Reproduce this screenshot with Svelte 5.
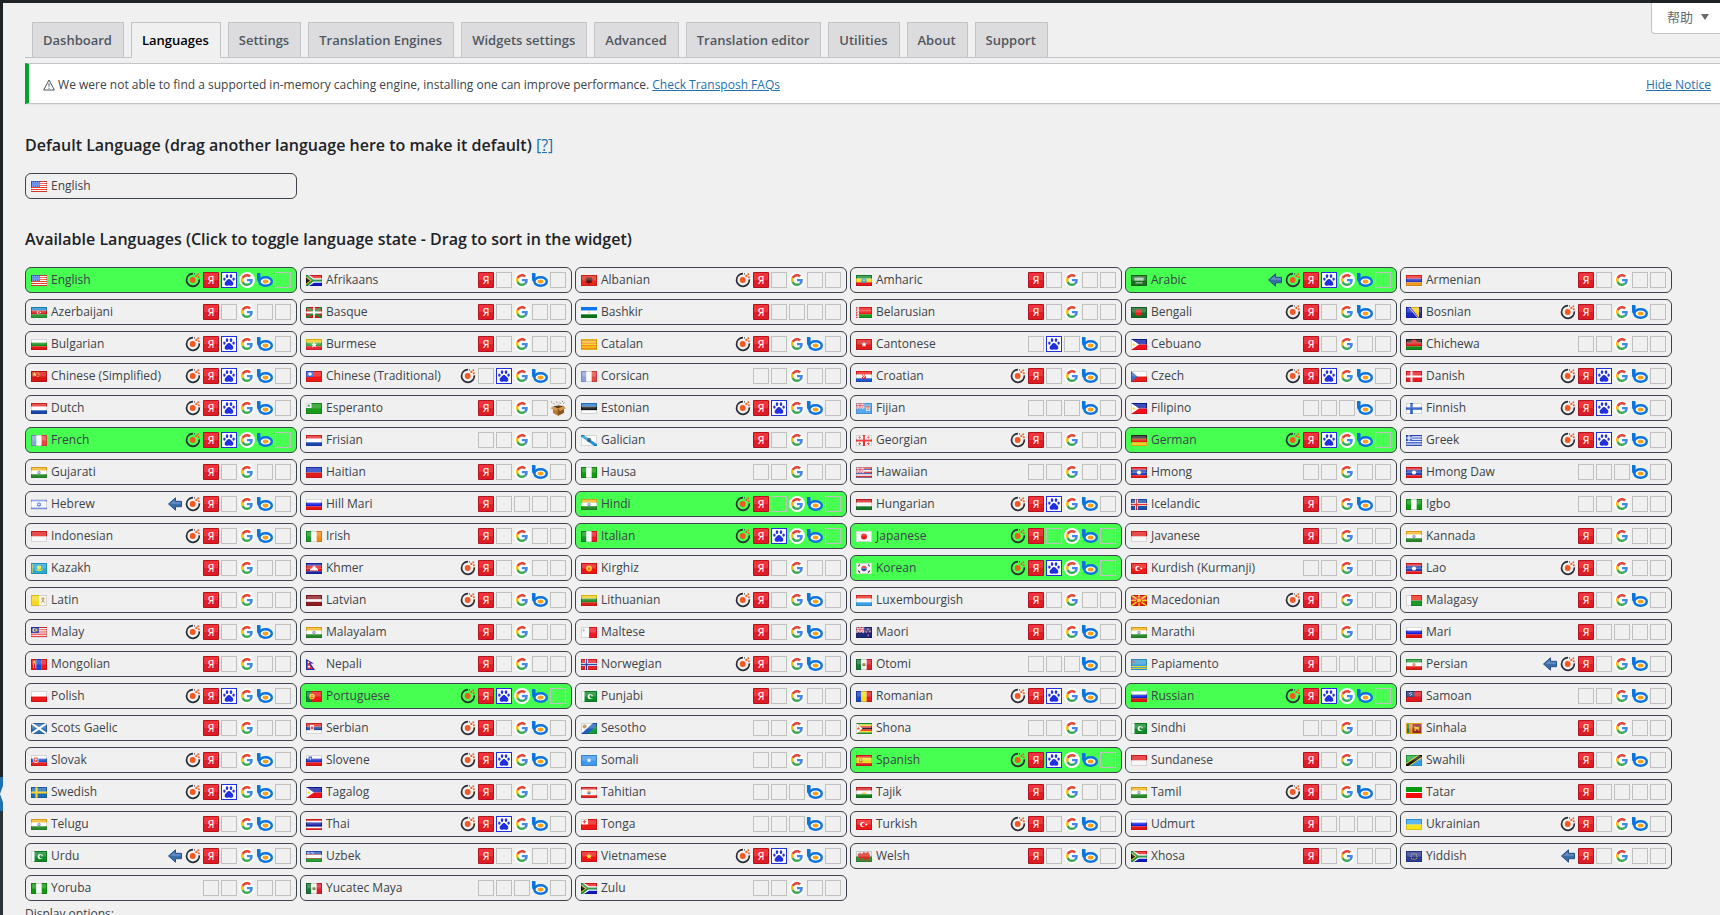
<script>
  const tabs = [
    'Dashboard', 'Languages', 'Settings', 'Translation Engines', 'Widgets settings',
    'Advanced', 'Translation editor', 'Utilities', 'About', 'Support'
  ];
  let current = $state('Languages');

  // Flag drawing helpers, all on a 16 x 11 field.
  const r = (c, x, y, w, h) => `<rect fill="${c}" x="${x}" y="${y}" width="${w}" height="${h}"/>`;
  const p = (c, d) => `<path fill="${c}" d="${d}"/>`;
  const l = (c, w, d) => `<path fill="none" stroke="${c}" stroke-width="${w}" d="${d}"/>`;
  const o = (c, x, y, s) => `<circle fill="${c}" cx="${x}" cy="${y}" r="${s}"/>`;
  const bg = (c) => r(c, 0, 0, 16, 11);
  const rows = (...cs) => cs.map((c, i) => r(c, 0, (i * 11) / cs.length, 16, 11 / cs.length)).join('');
  const cols = (...cs) => cs.map((c, i) => r(c, (i * 16) / cs.length, 0, 16 / cs.length, 11)).join('');
  const star = (c, x, y, s) =>
    p(c, 'M' + Array.from({ length: 10 }, (_, i) => {
      const a = (i * Math.PI) / 5 - Math.PI / 2;
      const q = i % 2 ? s * 0.42 : s;
      return `${(x + q * Math.cos(a)).toFixed(2)} ${(y + q * Math.sin(a)).toFixed(2)}`;
    }).join('L') + 'Z');
  const moon = (f, b, x, y, s) => o(f, x, y, s) + o(b, x + s * 0.4, y, s * 0.75);
  const jack = l('#fff', 1.6, 'M0 0L8 5.5M8 0L0 5.5') + l('#e05060', 0.8, 'M0 0L8 5.5M8 0L0 5.5') +
    l('#fff', 2, 'M4 0V5.5M0 2.75H8') + l('#e02030', 1, 'M4 0V5.5M0 2.75H8');
  const cross = (field, a, b) => bg(field) + l(a, 3, 'M5.5 0V11M0 5.5H16') + l(b, 1.4, 'M5.5 0V11M0 5.5H16');
  const ph = rows('#1020a0', '#f01020') + p('#fff', 'M0 0L8 5.5L0 11Z') + o('#f8d820', 2.6, 5.5, 1.2);
  const southAfrica = rows('#e8201c', '#1018c0') + p('#fff', 'M0 0H3L8 3.3H16V7.7H8L3 11H0Z') +
    p('#18903c', 'M0 0H1.6L7.2 4.4H16V6.6H7.2L1.6 11H0Z') + p('#f8c820', 'M0 1.2L5.6 5.5L0 9.8Z') + p('#101010', 'M0 2.4L4.2 5.5L0 8.6Z');
  const india = rows('#f5b51c', '#fff', '#2c8a2c') + o('#8090d0', 8, 5.5, 1.7) + o('#c8d0f0', 8, 5.5, 0.8);
  const lao = rows('#f01818', '#2444b8', '#2444b8', '#f01818') + o('#fff', 8, 5.5, 2.1);
  const mexico = cols('#187838', '#f6f6f0', '#d82030') + o('#a08850', 8, 5.5, 1.8) + o('#608048', 8, 6.1, 0.8);
  const pakistan = bg('#108a28') + r('#fff', 0, 0, 3.5, 11) + moon('#fff', '#108a28', 9.3, 5.5, 2.6) + star('#fff', 11, 4.6, 1.2);
  const russia = rows('#fff', '#1620e0', '#e81414');
  const dutch = rows('#e82828', '#fff', '#1c48b0');
  const indonesia = rows('#e02020', '#f8f8f8');
  const france = cols('#8ca0dc', '#fafafa', '#e84840');
  const nigeria = cols('#109a10', '#fafafa', '#109a10');
  const turkey = bg('#ee1818') + moon('#fff', '#ee1818', 6.6, 5.5, 2.5) + star('#fff', 10.3, 5.5, 1.5);

  const flags = {
    us: bg('#fff') + [0, 2, 4, 6, 8, 10].map((y) => r('#f04030', 0, y, 16, 1)).join('') + r('#3060e8', 0, 0, 9, 6) +
      [1, 3, 5].map((y) => [1, 3, 5, 7].map((x) => r('#d8e4ff', x + (y === 3 ? 0.6 : 0), y - 0.3, 0.8, 0.8)).join('')).join(''),
    za: southAfrica,
    al: bg('#e8281c') + p('#4c1410', 'M8 2l1 1 2-1-.5 2 2 1-2 .6L11 8 9 7.4 8 9.4 7 7.4 5 8l.5-2.4-2-.6 2-1L5 2l2 1Z'),
    et: rows('#188c30', '#f8e020', '#e81818') + o('#38a0d8', 8, 5.5, 2.6) + star('#f0e040', 8, 5.5, 1.4),
    sa: bg('#1a6c20') + r('#cfe4cf', 3.5, 2.6, 9, 3) + l('#1a6c20', 0.5, 'M5 2.6v3M7 2.6v2M9 3.2v2.6M11 2.6v2') + r('#cfe4cf', 4.5, 7.4, 7, 1),
    am: rows('#f02c24', '#2c38c8', '#f59a1c'),
    az: rows('#1f8fd0', '#e42020', '#2c9a38') + moon('#fff', '#e42020', 7.4, 5.5, 1.6) + o('#fff', 9.4, 5.5, 0.8),
    eu: bg('#d82020') + l('#109838', 2, 'M0 0L16 11M16 0L0 11') + l('#fff', 1.8, 'M8 0V11M0 5.5H16'),
    bashkir: rows('#0878f8', '#fff', '#0a7018') + o('#f0e888', 8, 5.5, 1.3),
    by: rows('#f01c18', '#f01c18', '#18a020') + r('#fff', 0, 0, 3, 11) + l('#e83030', 1.2, 'M.8 0V11') + l('#fff', 1.2, 'M.8 1.5v1M.8 4v1M.8 6.5v1M.8 9v1') + l('#e83030', 0.7, 'M2.2 1v1.4M2.2 4v1.4M2.2 7v1.4'),
    bd: bg('#186c28') + o('#f02020', 7.4, 5.5, 3.2),
    ba: bg('#1c28c0') + p('#f8cc20', 'M4.5 0H13V11Z') + l('#dfe4ff', 0.9, 'M3 .5L12 11'),
    bg: rows('#fafafa', '#18901c', '#e81414'),
    mm: rows('#f8cc10', '#38a838', '#e82838') + star('#fff', 8, 5.8, 3.4),
    cat: bg('#f8d020') + [1.5, 4, 6.5, 9].map((y) => r('#f07818', 0, y - 0.3, 16, 1)).join(''),
    hk: bg('#e01c1c') + star('#fff', 8, 5.5, 3),
    ph,
    mw: rows('#202020', '#e01818', '#188818') + p('#f02020', 'M5 3.6a3 3 0 0 1 6 0Z'),
    cn: bg('#d81414') + star('#f8e020', 3.6, 3.4, 2.4) + o('#f8e020', 7, 1.6, 0.6) + o('#f8e020', 8, 3.2, 0.6) + o('#f8e020', 7, 5.4, 0.6),
    tw: bg('#f01818') + r('#3858d8', 0, 0, 8, 6) + o('#fff', 4, 3, 1.7),
    france,
    hr: rows('#f02020', '#fff', '#1c58d0') + r('#e83030', 6, 2.4, 4, 5.6) + r('#fff', 7, 3.4, 1, 1.2) + r('#fff', 9, 3.4, 1, 1.2) + r('#fff', 6, 4.6, 1, 1.2) + r('#fff', 8, 4.6, 1, 1.2) + r('#fff', 7, 5.8, 1, 1.2),
    cz: rows('#fafafa', '#e81c1c') + p('#3c6cc8', 'M0 0L6.5 5.5L0 11Z'),
    dk: bg('#e81c24') + l('#fff', 2, 'M5.5 0V11M0 5.5H16'),
    dutch,
    eo: bg('#189a1c') + r('#fff', 0, 0, 5.5, 5) + star('#189a1c', 2.7, 2.7, 1.8),
    ee: rows('#2c78d0', '#181818', '#fafafa'),
    fj: bg('#58a8ec') + jack + r('#fff', 10, 3.4, 4, 4.4) + r('#e05030', 10, 3.2, 4, 1.4) + l('#c08040', 0.8, 'M12 4.4v3.4M10 6H14'),
    fi: bg('#fafafa') + l('#2c60c8', 2.6, 'M5.5 0V11M0 5.5H16'),
    gl: bg('#fafafa') + l('#1898d8', 3, 'M0 0L16 11') + o('#304860', 8, 4.8, 2.1),
    ge: bg('#fafafa') + l('#f03030', 2, 'M8 0V11M0 5.5H16') + [[3.6, 2.4], [12.4, 2.4], [3.6, 8.6], [12.4, 8.6]].map(([x, y]) => l('#f05050', 1, `M${x} ${y - 1.3}v2.6M${x - 1.3} ${y}h2.6`)).join(''),
    de: rows('#282828', '#e02018', '#f8cc20'),
    gr: bg('#fafafa') + [0, 2.4, 4.8, 7.2, 9.6].map((y) => r('#2c50c8', 0, y, 16, 1.3)).join('') + r('#2c50c8', 0, 0, 6, 6) + l('#fff', 1.1, 'M3 0V6M0 3H6'),
    india,
    ht: rows('#1c38c0', '#e01c1c'),
    nigeria,
    hawaii: bg('#fafafa') + [0, 4.2, 8.4].map((y) => r('#e83030', 0, y + 0.4, 16, 1.4) + r('#3048b0', 0, y + 2, 16, 1)).join('') + r('#8090d0', 0, 0, 7.5, 5.5) + jack,
    lao,
    il: bg('#fafafa') + r('#7c90e8', 0, 1, 16, 1.4) + r('#7c90e8', 0, 8.6, 16, 1.4) + l('#5870e0', 0.7, 'M8 3.4L10 6.6H6ZM8 7.6L6 4.4H10Z'),
    russia,
    hu: rows('#d82028', '#fafafa', '#187828'),
    is: cross('#1c50b0', '#fff', '#e81c1c'),
    indonesia,
    ie: cols('#189a28', '#fafafa', '#f58a18'),
    it: cols('#189030', '#fafafa', '#e81c24'),
    jp: bg('#fafafa') + o('#e81414', 8, 5.5, 3),
    kz: bg('#28a8d8') + o('#f4e430', 8, 4.8, 2.2) + l('#f4e430', 0.9, 'M4 6.2Q8 9.4 12 6.2') + l('#d8d850', 0.9, 'M1.2 1V10'),
    kh: rows('#1c28a8', '#e41818', '#e41818', '#1c28a8') + p('#fff', 'M4 7.6V6h1.4V4.8h1.2V3.6h1V2.8h1v.8h1v1.2h1.2V6H12v1.6Z'),
    kg: bg('#ec1414') + o('#f8c820', 8, 5.5, 2.9) + o('#ec6018', 8, 5.5, 1.3),
    kr: bg('#fafafa') + p('#e02030', 'M5.2 5.5a2.8 2.8 0 0 1 5.6 0Z') + p('#2050c0', 'M5.2 5.5a2.8 2.8 0 0 0 5.6 0Z') + l('#303030', 1.2, 'M2.2 3.4L4 1.4M12 1.4L13.8 3.4M2.2 7.6L4 9.6M12 9.6L13.8 7.6'),
    turkey,
    va: cols('#f8d820', '#f6f6f0') + l('#b09858', 1, 'M10.5 3.4L13.5 7.6M13.5 3.4L10.5 7.6') + o('#d08840', 12, 3.4, 1.1),
    lv: bg('#8c1c20') + r('#fafafa', 0, 4.2, 16, 2.6),
    lt: rows('#f4d018', '#188c28', '#d82018'),
    lu: rows('#f03028', '#fafafa', '#38a0e8'),
    mk: bg('#e81818') + l('#f8d020', 1.6, 'M0 0L16 11M16 0L0 11M8 0V11M0 5.5H16') + o('#e81818', 8, 5.5, 2.9) + o('#f8d020', 8, 5.5, 2),
    mg: rows('#f02818', '#189a28') + r('#fafafa', 0, 0, 5, 11),
    my: bg('#fff') + [0, 2.2, 4.4, 6.6, 8.8].map((y) => r('#e83030', 0, y, 16, 1.1)).join('') + r('#2c38b0', 0, 0, 8, 6) + moon('#f8e030', '#2c38b0', 3.4, 3, 2) + o('#f8e030', 5.4, 3, 1),
    mt: cols('#fafafa', '#ee1c24') + l('#b0b0b0', 0.9, 'M2.6 1.6v3M1.1 3.1h3'),
    nz: bg('#1c2878') + jack + [[12, 2.4], [14, 4.6], [10.4, 5], [12.2, 8.4]].map(([x, y]) => o('#f08088', x, y, 0.8)).join(''),
    mn: cols('#f01818', '#1848d8', '#f01818') + r('#f8c820', 2, 4.4, 0.9, 4.4) + r('#f8c820', 4, 4.4, 0.9, 4.4) + o('#f8c820', 3.4, 3, 1.2),
    np: p('#2030a0', 'M0 0L8 4.6H4.6L9 10.9H0Z') + p('#e02840', 'M1 1.7L5.4 4.1H2.8L7 9.9H1Z') + o('#fff', 2.6, 3.4, 0.8) + o('#fff', 3, 7.6, 1.2),
    no: cross('#e82028', '#fff', '#1c38a0'),
    mexico,
    aw: bg('#38a0d8') + r('#f8e020', 0, 7, 16, 0.9) + r('#f8e020', 0, 8.9, 16, 0.9) + star('#f02828', 2.6, 2.6, 1.7),
    ir: rows('#28a038', '#fafafa', '#e42018') + o('#e86050', 8, 5.5, 1.5) + o('#fff', 8, 5.2, 0.5),
    pl: rows('#fafafa', '#ee1818'),
    pt: r('#188030', 0, 0, 6, 11) + r('#f01818', 6, 0, 10, 11) + o('#f8d020', 6, 5.5, 2.8) + r('#e83030', 4.8, 4.1, 2.4, 2.8) + r('#fff', 5.5, 4.7, 1, 1.4),
    pakistan,
    ro: cols('#1c48c0', '#f8dc20', '#e42020'),
    ws: bg('#e01820') + r('#283878', 0, 0, 8.5, 6) + l('#c8d0f0', 0.9, 'M3 2.6L5.6 1.6M4.2 4.6L6 3'),
    scot: bg('#2c70b8') + l('#fff', 2, 'M0 0L16 11M16 0L0 11'),
    rs: rows('#e42828', '#2448a0', '#fafafa') + p('#f4f0f0', 'M4 2h4v4.6q-2 2-4 0Z') + o('#e03030', 6, 4.8, 1.5),
    ls: bg('#fafafa') + p('#189a38', 'M16 0V11H4Z') + p('#2060c0', 'M12 0H16V2.6L6.5 11H0Z') + o('#b08848', 3.6, 3.6, 2),
    zw: [0, 1.57, 3.14, 4.71, 6.28, 7.85, 9.42].map((y, i) => r(['#28a038', '#f8dc20', '#e82020', '#181818', '#e82020', '#f8dc20', '#28a038'][i], 0, y, 16, 1.6)).join('') + p('#fff', 'M0 0L6.5 5.5L0 11Z') + star('#e84020', 2.4, 5.5, 1.9),
    lk: bg('#f8c020') + r('#188050', 1, 1, 2.2, 9) + r('#f08020', 3.2, 1, 2.2, 9) + r('#98242c', 6.4, 1, 8.6, 9) + p('#f0b830', 'M8.4 8V5l-.6-2 2 1h3l.6 2v2h-1V6.6H9.8V8Z'),
    sk: rows('#fafafa', '#1c50d0', '#e82020') + p('#fff', 'M2.4 2h5v4.4q-2.5 3-5 0Z') + p('#e82828', 'M3 2.6h3.8v3.6q-1.9 2-3.8 0Z') + l('#fff', 0.7, 'M4.9 3v3.6M3.8 4.4h2.2'),
    si: rows('#fafafa', '#1c34c8', '#e81818') + p('#2050c0', 'M2.6 1.4h3.4v3.4q-1.7 2-3.4 0Z') + o('#fff', 4.3, 3.8, 0.7),
    so: bg('#4098ec') + star('#fff', 8, 5.5, 2.6),
    es: rows('#ee1c1c', '#f8dc20', '#f8dc20', '#ee1c1c') + r('#d87828', 3, 3.4, 3.4, 4) + r('#f0e0c0', 4, 4.2, 1.2, 1.8),
    tz: p('#28a848', 'M0 0H16L0 11Z') + p('#30a0e0', 'M16 0V11H0Z') + l('#f8dc20', 4.4, 'M0 11L16 0') + l('#181818', 2.8, 'M0 11L16 0'),
    se: bg('#1c6cb8') + l('#f8d020', 2.2, 'M5.5 0V11M0 5.5H16'),
    pf: rows('#e42828', '#fafafa', '#fafafa', '#e42828') + o('#f0a830', 8, 5, 1.8) + p('#4080c8', 'M6.2 5.6h3.6a1.8 1.8 0 0 1-3.6 0Z'),
    tj: rows('#d82020', '#fafafa', '#188020') + p('#f0cc40', 'M5.5 7V5.6l1.4.6L8 4.4l1.1 1.8 1.4-.6V7Z'),
    tatar: r('#0a9a10', 0, 0, 16, 5) + r('#fff', 0, 5, 16, 1) + r('#fc0808', 0, 6, 16, 5),
    th: bg('#fafafa') + r('#ee1c1c', 0, 0, 16, 1.8) + r('#1c24a0', 0, 3.4, 16, 4.2) + r('#ee1c1c', 0, 9.2, 16, 1.8),
    to: bg('#ee1818') + r('#fff', 0, 0, 7, 5.4) + l('#ee3030', 1.2, 'M3.5 1v3.4M1.8 2.7h3.4'),
    ua: rows('#38a4f0', '#f8e41c'),
    uz: rows('#3058c0', '#fafafa', '#28a038') + r('#d83030', 0, 3.4, 16, 0.6) + r('#d83030', 0, 7, 16, 0.6) + moon('#fff', '#3058c0', 2.6, 1.9, 1.2) + o('#fff', 5.4, 1.2, 0.5) + o('#fff', 7, 1.2, 0.5) + o('#fff', 7, 2.5, 0.5),
    vn: bg('#ee1414') + star('#f8ec20', 8, 5.5, 3.2),
    wales: rows('#e8e8e8', '#289a38') + p('#d83028', 'M2 3l2-1.6 1.6 1.6 2-2 2.4 1 2-1.2 1.4 2 1.2 3-1.6.4.6 3.2h-1.6l-1-2-1.6 2.4H7.6L8 7.4 5.6 7 5 9.4H3.2L4 6 1.6 6.6Z'),
    europe: bg('#2c3c94') + Array.from({ length: 10 }, (_, i) => o('#f4e040', 8 + 3 * Math.cos(i * 0.628), 5.5 + 3 * Math.sin(i * 0.628), 0.5)).join('')
  };
  const matte = ['bashkir', 'tatar', 'np'];

  // name | flag | engines: a right-to-left, o open translate, y Yandex, b Baidu, g Google, m Bing, p Apertium, . unsupported
  const source = `English|us|oybgm.|1
Afrikaans|za|y.gm.
Albanian|al|oy.g..
Amharic|et|y.g..
Arabic|sa|aoybgm.|1
Armenian|am|y.g..
Azerbaijani|az|y.g..
Basque|eu|y.g..
Bashkir|bashkir|y....
Belarusian|by|y.g..
Bengali|bd|oy.gm.
Bosnian|ba|oy.gm.
Bulgarian|bg|oybgm.
Burmese|mm|y.g..
Catalan|cat|oy.gm.
Cantonese|hk|.b.m.
Cebuano|ph|y.g..
Chichewa|mw|..g..
Chinese (Simplified)|cn|oybgm.
Chinese (Traditional)|tw|o.bgm.
Corsican|france|..g..
Croatian|hr|oy.gm.
Czech|cz|oybgm.
Danish|dk|oybgm.
Dutch|dutch|oybgm.
Esperanto|eo|y.g.p
Estonian|ee|oybgm.
Fijian|fj|...m.
Filipino|ph|...m.
Finnish|fi|oybgm.
French|france|oybgm.|1
Frisian|dutch|..g..
Galician|gl|y.g..
Georgian|ge|oy.g..
German|de|oybgm.|1
Greek|gr|oybgm.
Gujarati|india|y.g..
Haitian|ht|y.gm.
Hausa|nigeria|..g..
Hawaiian|hawaii|..g..
Hmong|lao|..g..
Hmong Daw|lao|...m.
Hebrew|il|aoy.gm.
Hill Mari|russia|y....
Hindi|india|oy.gm.|1
Hungarian|hu|oybgm.
Icelandic|is|y.gm.
Igbo|nigeria|..g..
Indonesian|indonesia|oy.gm.
Irish|ie|y.g..
Italian|it|oybgm.|1
Japanese|jp|oy.gm.|1
Javanese|indonesia|y.g..
Kannada|india|y.g..
Kazakh|kz|y.g..
Khmer|kh|oy.g..
Kirghiz|kg|y.g..
Korean|kr|oybgm.|1
Kurdish (Kurmanji)|turkey|..g..
Lao|lao|oy.g..
Latin|va|y.g..
Latvian|lv|oy.gm.
Lithuanian|lt|oy.gm.
Luxembourgish|lu|y.g..
Macedonian|mk|oy.g..
Malagasy|mg|y.gm.
Malay|my|oy.gm.
Malayalam|india|y.g..
Maltese|mt|y.gm.
Maori|nz|y.gm.
Marathi|india|y.g..
Mari|russia|y....
Mongolian|mn|y.g..
Nepali|np|y.g..
Norwegian|no|oy.gm.
Otomi|mexico|...m.
Papiamento|aw|y....
Persian|ir|aoy.gm.
Polish|pl|oybgm.
Portuguese|pt|oybgm.|1
Punjabi|pakistan|y.g..
Romanian|ro|oybgm.
Russian|russia|oybgm.|1
Samoan|ws|..gm.
Scots Gaelic|scot|y.g..
Serbian|rs|oy.gm.
Sesotho|ls|..g..
Shona|zw|..g..
Sindhi|pakistan|..g..
Sinhala|lk|y.g..
Slovak|sk|oy.gm.
Slovene|si|oybgm.
Somali|so|..g..
Spanish|es|oybgm.|1
Sundanese|indonesia|y.g..
Swahili|tz|y.gm.
Swedish|se|oybgm.
Tagalog|ph|oy.g..
Tahitian|pf|...m.
Tajik|tj|y.g..
Tamil|india|oy.gm.
Tatar|tatar|y....
Telugu|india|y.gm.
Thai|th|oybgm.
Tonga|to|...m.
Turkish|turkey|oy.gm.
Udmurt|russia|y....
Ukrainian|ua|oy.gm.
Urdu|pakistan|aoy.gm.
Uzbek|uz|y.g..
Vietnamese|vn|oybgm.
Welsh|wales|y.gm.
Xhosa|za|y.g..
Yiddish|europe|ay.g..
Yoruba|nigeria|..g..
Yucatec Maya|mexico|...m.
Zulu|za|..g..`;

  let languages = $state(
    source.split('\n').map((line) => {
      const [name, flag, engines, on] = line.split('|');
      return { name, flag, engines: [...engines], active: on === '1' };
    })
  );
</script>

{#snippet flagIcon(code)}
  <svg class="flag" viewBox="0 0 16 11" aria-hidden="true">
    {@html flags[code]}
    {#if !matte.includes(code)}
      <rect x="1" y="1" width="14" height="4.5" fill="#fff" opacity=".2" />
      <rect x=".5" y=".5" width="15" height="10" fill="none" stroke="#000" opacity=".14" />
    {/if}
  </svg>
{/snippet}

{#snippet engineIcon(kind)}
  {#if kind === '.'}
    <span class="empty"></span>
  {:else}
    <svg class="engine" viewBox="0 0 16 16" aria-hidden="true">
      {#if kind === 'a'}
        <path d="M1.5 8L8.5 1.8V5.3H14.5V10.7H8.5V14.2Z" fill="#3a6ea8" stroke="#284f86" />
        <path d="M3.4 7.8L7.8 3.9V6.2H13.8V7.8Z" fill="#6593c4" />
      {:else if kind === 'o'}
        <path d="M8 1.6A6.4 6.4 0 1 0 14.3 7.4" fill="none" stroke="#2b2b33" stroke-width="1.7" />
        <path d="M9.200 1.800L9.800 1.900" stroke="#2b2b33" stroke-width="1.5" />
        <circle cx="7.700" cy="8" r="2.900" fill="#f4581f" />
        <circle cx="11.400" cy="3.900" r="1.100" fill="#f4581f" />
        <circle cx="13.300" cy="2.200" r=".9" fill="#f4581f" />
        <circle cx="13.800" cy="5.200" r="1" fill="#f4581f" />
      {:else if kind === 'y'}
        <rect width="16" height="16" rx="1" fill="#b01420" />
        <rect x="1" y="1" width="14" height="14" fill="#e01c26" />
        <rect x="1" y="1" width="14" height="7" fill="#f2343a" />
        <text x="8" y="12" text-anchor="middle" class="ya">Я</text>
      {:else if kind === 'b'}
        <rect x=".5" y=".5" width="15" height="15" fill="#fff" stroke="#2030e0" />
        <g fill="#2030e0">
          <ellipse cx="6" cy="4.1" rx="1.3" ry="1.9" />
          <ellipse cx="10" cy="4.1" rx="1.3" ry="1.9" />
          <ellipse cx="3.4" cy="7.1" rx="1.2" ry="1.6" />
          <ellipse cx="12.6" cy="7.1" rx="1.2" ry="1.6" />
          <path d="M8 7.1C9.8 7.1 10.2 8.6 11.3 9.6C13 11 12.6 13.8 10.4 13.8C9.4 13.8 9 13.5 8 13.5S6.6 13.8 5.6 13.8C3.4 13.8 3 11 4.7 9.6C5.8 8.6 6.2 7.1 8 7.1Z" />
        </g>
      {:else if kind === 'g'}
        <circle cx="8" cy="8" r="8" fill="#fff" />
        <g transform="translate(2 2) scale(.25)">
          <path fill="#ea4335" d="M24 9.500c3.540 0 6.710 1.220 9.210 3.600l6.850-6.850C35.900 2.380 30.470 0 24 0 14.620 0 6.510 5.380 2.560 13.220l7.980 6.190C12.430 13.720 17.740 9.500 24 9.500z" />
          <path fill="#4285f4" d="M46.980 24.550c0-1.570-.15-3.090-.38-4.550H24v9.020h12.940c-.58 2.960-2.260 5.480-4.780 7.180l7.730 6c4.510-4.180 7.090-10.360 7.090-17.650z" />
          <path fill="#fbbc05" d="M10.530 28.590c-.48-1.450-.76-2.990-.76-4.590s.27-3.140.76-4.590l-7.980-6.190C.92 16.460 0 20.120 0 24c0 3.880.92 7.540 2.560 10.780l7.970-6.190z" />
          <path fill="#34a853" d="M24 48c6.480 0 11.930-2.130 15.890-5.810l-7.730-6c-2.150 1.450-4.920 2.300-8.160 2.300-6.260 0-11.570-4.220-13.470-9.910l-7.980 6.190C6.510 42.620 14.620 48 24 48z" />
        </g>
      {:else if kind === 'm'}
        <ellipse cx="8.600" cy="9.500" rx="6.200" ry="4.300" fill="#fff" stroke="#0a74dc" stroke-width="2.400" />
        <path d="M0 1H2.600Q3.600 1 3.600 2V8L1.400 10Q0 9 0 7Z" fill="#0a74dc" />
        <ellipse cx="8.600" cy="9.500" rx="2.900" ry="2" fill="#f8a01c" />
      {:else}
        <path d="M3 6.600L8 8.600L14 6V12.800L8 15.800L3 13Z" fill="#b87830" />
        <path d="M8 8.600L14 6V12.800L8 15.800Z" fill="#8a5420" />
        <path d="M3 6.600L7.600 5.400L14 6L8 8.600Z" fill="#5c3814" />
        <path d="M3 6.600L8 8.600L6 11L.4 8.200ZM14 6L15.800 8.400L10 11L8 8.600Z" fill="#d09850" />
        <path d="M1 1.500l1.200 1M3.600 3.200l1 1.200M6.500 1.600l.6 1.400M9.600 2.400l1.200 1M12 .8l1 1.200M13.200 3.600l1.200-1M8.400 4l1 .8" stroke="#7c7064" fill="none" />
      {/if}
    </svg>
  {/if}
{/snippet}

<div class="shell">
  <aside class="menu">
    <span class="menu-current"></span>
    <span class="menu-rest"></span>
  </aside>
  <main>
    <nav class="tabs" aria-label="Sections">
      {#each tabs as tab}
        <a href="#{tab}" class:current={tab === current} onclick={() => (current = tab)}>{tab}</a>
      {/each}
    </nav>
    <button class="help" type="button">帮助 <span class="caret"></span></button>

    <div class="notice">
      <p>
        <svg class="warn" viewBox="0 0 12 12" aria-hidden="true">
          <path d="M6 1L11.400 11H.6Z" fill="none" stroke="#50575e" />
          <path d="M6 4.200V7.600M6 8.600V9.800" stroke="#50575e" />
        </svg>
        We were not able to find a supported in-memory caching engine, installing one can improve performance.
        <a href="#faq">Check Transposh FAQs</a>
      </p>
      <a href="#hide">Hide Notice</a>
    </div>

    <h3>Default Language (drag another language here to make it default) <a href="#help">[?]</a></h3>
    <div class="card default">{@render flagIcon('us')}<span>English</span></div>

    <h3>Available Languages (Click to toggle language state - Drag to sort in the widget)</h3>
    <ul class="grid">
      {#each languages as lang}
        <li>
          <button
            type="button"
            class="card"
            class:active={lang.active}
            aria-pressed={lang.active}
            onclick={() => (lang.active = !lang.active)}
          >
            {@render flagIcon(lang.flag)}
            <span class="name">{lang.name}</span>
            <span class="engines">
              {#each lang.engines as kind}{@render engineIcon(kind)}{/each}
            </span>
          </button>
        </li>
      {/each}
    </ul>
    <p class="options">Display options:</p>
  </main>
</div>

<style>
  :global(body) {
    margin: 0;
    background: #f0f0f1;
  }
  .shell {
    box-sizing: border-box;
    display: flex;
    height: 100vh;
    overflow: hidden;
    border-top: 3px solid #1d2327;
    background: #f0f0f0;
    color: #3c434a;
    font: 12px/20px 'Open Sans', 'Noto Sans CJK SC', sans-serif;
  }
  .menu {
    display: flex;
    flex-direction: column;
    flex: none;
    width: 3px;
    background: #1d2327;
  }
  .menu-current {
    height: 34px;
    margin-top: 774px;
    background: #f0f0f0;
  }
  .menu-current::before {
    content: '';
    display: block;
    height: 100%;
    background: #2271b1;
    clip-path: polygon(0 0, 100% 0, 100% 26%, 0 50%, 100% 74%, 100% 100%, 0 100%);
  }
  .menu-rest {
    flex: 1;
    background: #2c3338;
  }
  main {
    position: relative;
    flex: 1;
    min-width: 0;
    padding-left: 22px;
  }
  a {
    color: #2271b1;
  }
  .tabs {
    display: flex;
    gap: 7px;
    padding: 19px 0 0 7px;
    border-bottom: 1px solid #c3c4c7;
  }
  .tabs a {
    padding: 5px 11px 5px 10px;
    border: 1px solid #c3c4c7;
    border-bottom: 0;
    background: #dcdcde;
    color: #50575e;
    font-size: 13px;
    font-weight: 600;
    line-height: 24px;
    text-decoration: none;
  }
  .tabs .current {
    margin-bottom: -1px;
    padding-bottom: 6px;
    background: #f0f0f0;
    color: #000;
  }
  .help {
    position: absolute;
    top: 0;
    right: 0;
    display: flex;
    align-items: center;
    gap: 8px;
    height: 31px;
    padding: 0 11px 2px 15px;
    border: 1px solid #c3c4c7;
    border-width: 0 0 1px 1px;
    border-radius: 0 0 0 4px;
    background: #fff;
    color: #646970;
    font: inherit;
    font-size: 13px;
  }
  .caret {
    border: 4px solid transparent;
    border-top: 6px solid #646970;
    border-bottom: 0;
  }
  .notice {
    display: flex;
    justify-content: space-between;
    align-items: center;
    box-sizing: border-box;
    height: 41px;
    margin: 5px 0 29px;
    padding: 2px 9px 0 14px;
    border: 1px solid #c3c4c7;
    border-right: 0;
    border-left: 4px solid #00a32a;
    background: #fff;
    box-shadow: 0 1px 1px rgba(0, 0, 0, 0.04);
  }
  .notice p {
    margin: 0;
  }
  .warn {
    width: 12px;
    height: 12px;
    vertical-align: -2px;
  }
  h3 {
    margin: 28px 0 16px;
    color: #1d2327;
    font-size: 16px;
    font-weight: 600;
    line-height: 24px;
  }
  h3 a {
    font-weight: 400;
  }
  .card {
    box-sizing: border-box;
    display: flex;
    align-items: center;
    gap: 4px;
    width: 272px;
    height: 26px;
    padding: 0 5px;
    border: 1px solid #3c434a;
    border-radius: 6px;
    background: transparent;
    color: #3c434a;
    font: inherit;
    text-align: left;
  }
  .active {
    background: #46ff51;
  }
  .grid {
    display: grid;
    grid-template-columns: repeat(auto-fill, 272px);
    gap: 6px 3px;
    margin: 0;
    padding: 0;
    list-style: none;
  }
  .flag {
    flex: none;
    width: 16px;
    height: 11px;
  }
  .name {
    flex: 1;
    white-space: nowrap;
  }
  .engines {
    display: flex;
    gap: 2px;
  }
  .engine,
  .empty {
    box-sizing: border-box;
    width: 16px;
    height: 16px;
  }
  .empty {
    border: 1px solid #c0c0c0;
  }
  .ya {
    fill: #fff;
    font: 11px 'Liberation Sans Narrow', 'DejaVu Sans Condensed', 'Roboto', sans-serif;
  }
  .options {
    margin: 3px 0;
  }
</style>
